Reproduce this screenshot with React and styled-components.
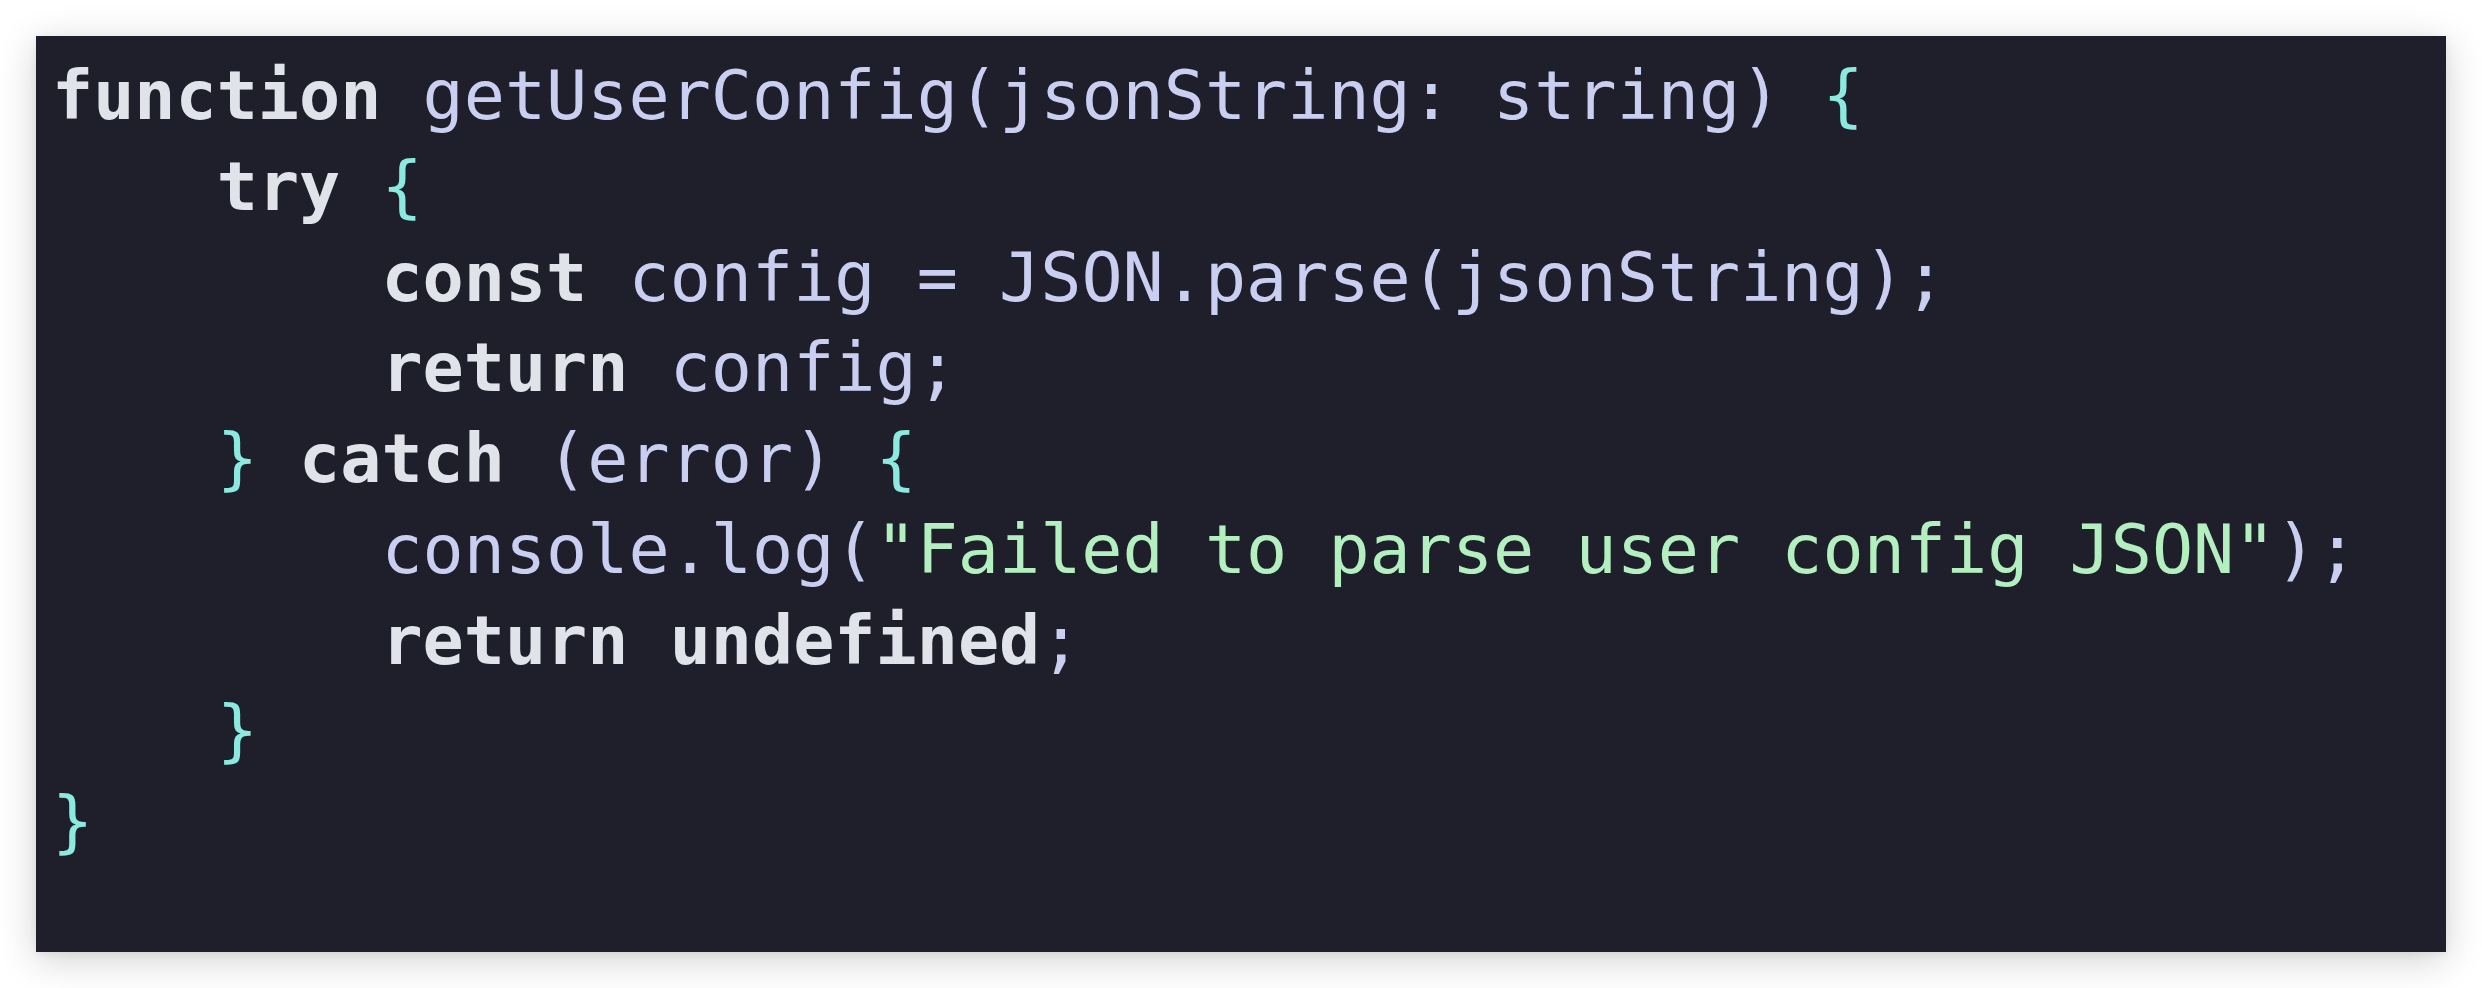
import React from 'react'
import styled, { createGlobalStyle } from 'styled-components'

const GlobalStyle = createGlobalStyle`
  html, body {
    margin: 0;
    padding: 0;
    background: #ffffff;
  }
`

const colors = {
  keyword: '#e1e3ea',
  ident: '#cacef0',
  brace: '#8be9e0',
  string: '#b3efbf',
}

// each line is a list of [kind, text] pairs
const code = [
  [['keyword', 'function'], ['ident', ' getUserConfig(jsonString: string) '], ['brace', '{']],
  [['ident', '    '], ['keyword', 'try'], ['ident', ' '], ['brace', '{']],
  [['ident', '        '], ['keyword', 'const'], ['ident', ' config = JSON.parse(jsonString);']],
  [['ident', '        '], ['keyword', 'return'], ['ident', ' config;']],
  [['ident', '    '], ['brace', '}'], ['ident', ' '], ['keyword', 'catch'], ['ident', ' (error) '], ['brace', '{']],
  [['ident', '        console.log('], ['string', '"Failed to parse user config JSON"'], ['ident', ');']],
  [['ident', '        '], ['keyword', 'return'], ['ident', ' '], ['keyword', 'undefined'], ['ident', ';']],
  [['ident', '    '], ['brace', '}']],
  [['brace', '}']],
]

const App = () => {
  return (
    <Page>
      <GlobalStyle />
      <Panel>
        <Code>
          {code.map((line, i) => (
            <Line key={i}>
              {line.map(([kind, text], j) => (
                <Token key={j} $kind={kind}>{text}</Token>
              ))}
            </Line>
          ))}
        </Code>
      </Panel>
    </Page>
  )
}

const Page = styled.div`
  width: 2482px;
  height: 988px;
  box-sizing: border-box;
  padding: 36px;
  background: #ffffff;
`

const Panel = styled.div`
  width: 2410px;
  height: 916px;
  box-sizing: border-box;
  background: #1f1f2c;
  box-shadow: 0 8px 36px rgba(0, 0, 0, 0.18), 0 2px 8px rgba(0, 0, 0, 0.06);
  padding: 15px 16px;
`

const Code = styled.pre`
  margin: 0;
  font-family: "DejaVu Sans Mono", "Liberation Mono", monospace;
  font-size: 68.4px;
  line-height: 90.75px;
  letter-spacing: 0;
`

const Line = styled.div`
  white-space: pre;
  height: 90.75px;
`

const Token = styled.span`
  color: ${({ $kind }) => colors[$kind]};
  font-weight: ${({ $kind }) => ($kind === 'keyword' ? 700 : 400)};
`

export default App
